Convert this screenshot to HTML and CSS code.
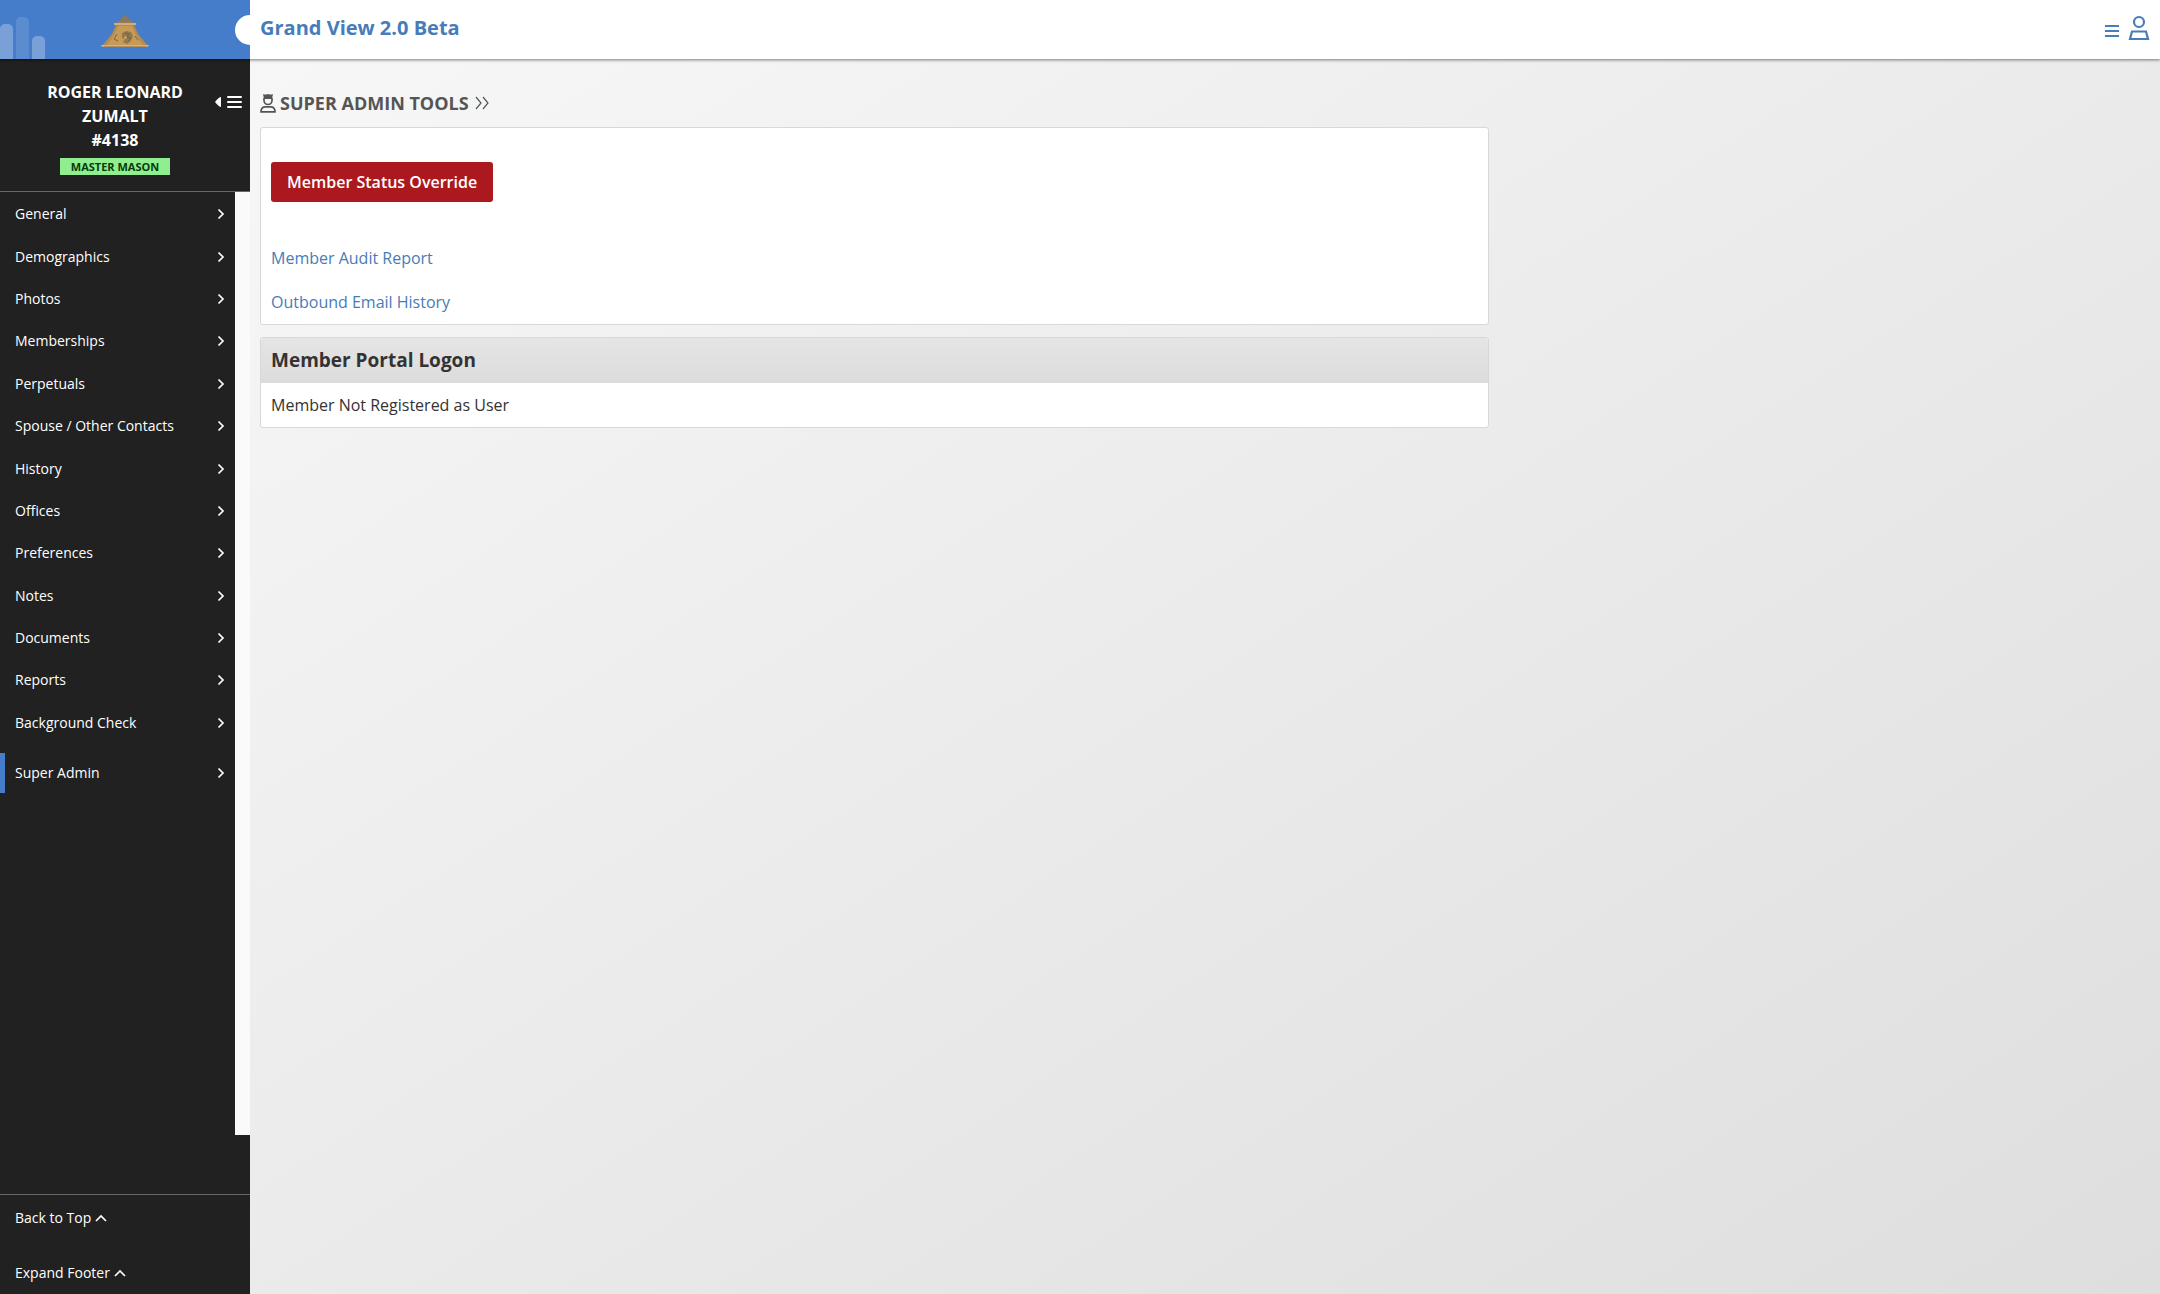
FILE: index.html
```html
<!DOCTYPE html>
<html lang="en">
<head>
<meta charset="utf-8">
<meta name="viewport" content="width=device-width, initial-scale=1">
<title>Grand View 2.0 Beta</title>
<link rel="stylesheet" href="styles.css">
</head>
<body>
<svg class="sprite" aria-hidden="true">
  <symbol id="chevron" viewBox="0 0 8 12"><path d="M1.500 1.500 6 6l-4.500 4.500" fill="none" stroke="currentColor" stroke-width="1.700"/></symbol>
  <symbol id="caret-up" viewBox="0 0 12 8"><path d="M1 7l5-5 5 5" fill="none" stroke="currentColor" stroke-width="1.700"/></symbol>
</svg>
<header class="topbar">
  <div class="brand">
    <span class="bars"><i class="bar"></i><i class="bar bar-tall"></i><i class="bar bar-short"></i></span>
    <svg class="logo" viewBox="0 0 50 36" role="img" aria-label="Logo">
      <path d="M25 0l1 3 3 2 2 4H19l2-4 3-2z" fill="#8b7660"/>
      <path d="M18 8h14l2 2H16z" fill="#987a4c"/>
      <path d="M14 10h22v2H14z" fill="#c9ae88"/>
      <path d="M16 12h18l4 9 10 12H2l10-12z" fill="#b98a48"/>
      <path d="M18 13h14l4 9 7 10H7l7-10z" fill="#c79a55"/>
      <path d="M22 20l4-2 5 1 2 4-2 5-4 3-4-2 2-3-3-1z" fill="#94774a"/>
      <path d="M25 20l4 1-2 3 4 1-3 3m-11-7-3 5 4 2m17-5 3 4" fill="none" stroke="#6f6650" stroke-width="1"/>
      <path d="M24 24l2-1 1 2-2 1z" fill="#d3aa68"/>
      <path d="M1 32h48v1l-3 1H4l-3-1z" fill="#d0b284"/>
      <path d="M4 34h42" stroke="#8e7144" stroke-width="1"/>
    </svg>
    <span class="knob"></span>
  </div>
  <div class="topbar-main">
    <a class="title" href="#">Grand View 2.0 Beta</a>
    <div class="actions">
      <button class="icon-button" aria-label="Menu"><svg width="16" height="14" viewBox="0 0 16 14"><path d="M1 2h14M1 7h14M1 12h14" stroke="currentColor" stroke-width="2"/></svg></button>
      <button class="icon-button" aria-label="Account"><svg width="22" height="26" viewBox="0 0 22 26"><circle cx="11" cy="7" r="5" fill="none" stroke="currentColor" stroke-width="2.200"/><path d="M4 16.500h14l2 7.500H2z" fill="none" stroke="currentColor" stroke-width="2.200"/></svg></button>
    </div>
  </div>
</header>
<div class="shell">
  <aside class="sidebar">
    <div class="profile">
      <div class="member">
        <div>ROGER LEONARD ZUMALT</div>
        <div>#4138</div>
        <span class="badge">MASTER MASON</span>
      </div>
      <button class="collapse" aria-label="Collapse menu"><svg width="28" height="14" viewBox="0 0 28 14"><path d="M7 2v10Q5 12 1 7 5 2 7 2z" fill="currentColor"/><path d="M14 2h13M14 7h13M14 12h13" stroke="currentColor" stroke-width="2" stroke-linecap="round"/></svg></button>
    </div>
    <nav class="nav">
      <ul class="nav-list">
        <li><a href="#">General<svg><use href="#chevron"/></svg></a></li>
        <li><a href="#">Demographics<svg><use href="#chevron"/></svg></a></li>
        <li><a href="#">Photos<svg><use href="#chevron"/></svg></a></li>
        <li><a href="#">Memberships<svg><use href="#chevron"/></svg></a></li>
        <li><a href="#">Perpetuals<svg><use href="#chevron"/></svg></a></li>
        <li><a href="#">Spouse / Other Contacts<svg><use href="#chevron"/></svg></a></li>
        <li><a href="#">History<svg><use href="#chevron"/></svg></a></li>
        <li><a href="#">Offices<svg><use href="#chevron"/></svg></a></li>
        <li><a href="#">Preferences<svg><use href="#chevron"/></svg></a></li>
        <li><a href="#">Notes<svg><use href="#chevron"/></svg></a></li>
        <li><a href="#">Documents<svg><use href="#chevron"/></svg></a></li>
        <li><a href="#">Reports<svg><use href="#chevron"/></svg></a></li>
        <li><a href="#">Background Check<svg><use href="#chevron"/></svg></a></li>
      </ul>
      <a class="nav-active" href="#" aria-current="page">Super Admin<svg><use href="#chevron"/></svg></a>
    </nav>
    <div class="side-footer">
      <a href="#">Back to Top <svg><use href="#caret-up"/></svg></a>
      <a href="#">Expand Footer <svg><use href="#caret-up"/></svg></a>
    </div>
  </aside>
  <main class="content">
    <h1 class="page-title">
      <svg width="16" height="19" viewBox="0 0 16 19" aria-hidden="true"><path d="M3 0q2 1 5 0 3 1 5 0l-1 5H4z" fill="currentColor"/><path d="M4 4v2.500a4 4 0 0 0 8 0V4M1 17.800c0-3.500 2-5 4.500-5h5c2.500 0 4.500 1.500 4.500 5z" fill="none" stroke="currentColor" stroke-width="1.700"/></svg>
      SUPER ADMIN TOOLS
      <svg class="title-arrows" width="14" height="14" viewBox="0 0 14 14" aria-hidden="true"><path d="M1 1l5 6-5 6M8 1l5 6-5 6" fill="none" stroke="currentColor" stroke-width="1.200"/></svg>
    </h1>
    <section class="panel tools">
      <button class="override">Member Status Override</button>
      <a href="#">Member Audit Report</a>
      <a href="#">Outbound Email History</a>
    </section>
    <section class="panel">
      <h2 class="panel-title">Member Portal Logon</h2>
      <p class="panel-text">Member Not Registered as User</p>
    </section>
  </main>
</div>
</body>
</html>
```
FILE: styles.css
```css
* { box-sizing: border-box; }
body {
  margin: 0;
  min-height: 100vh;
  display: flex;
  flex-direction: column;
  font: 16px/24px "Open Sans", "Noto Sans", sans-serif;
  color: #333;
  background: #eee;
}
a { color: #477cb9; text-decoration: none; }
button { font: inherit; border: 0; padding: 0; background: none; cursor: pointer; }
svg { display: block; flex: none; }
.sprite { position: absolute; width: 0; height: 0; }

.topbar { display: flex; height: 59px; position: relative; box-shadow: 0 1px 3px rgba(0, 0, 0, .5); }
.brand {
  position: relative;
  width: 250px;
  display: flex;
  justify-content: center;
  align-items: flex-start;
  padding-top: 13px;
  overflow: hidden;
  background: #467dca;
}
.logo { width: 50px; height: 36px; }
.bars { position: absolute; left: 0; bottom: 0; display: flex; align-items: flex-end; gap: 3px; }
.bar { width: 13px; height: 35px; border-radius: 5px 5px 0 0; background: rgba(255, 255, 255, .28); }
.bar-tall { height: 42px; background: rgba(255, 255, 255, .12); }
.bar-short { height: 23px; }
.knob { position: absolute; right: -15px; top: 15px; width: 30px; height: 30px; border-radius: 50%; background: #fff; }
.topbar-main { flex: 1; display: flex; justify-content: space-between; padding: 14px 10px 0; background: #fff; }
.title { font-size: 20px; line-height: 28px; font-weight: 700; }
.actions { display: flex; align-items: flex-start; gap: 8px; }
.icon-button { color: #477cb9; height: 28px; display: flex; align-items: center; }
.icon-button:first-child { height: 34px; }

.shell { flex: 1; display: flex; }
.sidebar { width: 250px; display: flex; flex-direction: column; background: #212121; }
.profile { display: flex; padding: 21px 8px 16px 30px; border-bottom: 1px solid #666; color: #fff; }
.member { width: 170px; text-align: center; font-weight: 700; }
.badge {
  display: block;
  width: 110px;
  margin: 6px auto 0;
  font-size: 11px;
  line-height: 17px;
  color: #063b06;
  background: #90ee90;
}
.collapse { margin: 15px 0 0 auto; color: #fff; height: 14px; }
.nav {
  flex: 1;
  padding: 1px 15px 0 0;
  background: linear-gradient(to left, #fafafa 15px, #212121 15px);
}
.nav-list { height: 551px; margin: 0; padding: 0; list-style: none; display: flex; flex-direction: column; }
.nav-list li { flex: 1; display: flex; }
.nav a {
  flex: 1;
  display: flex;
  align-items: center;
  justify-content: space-between;
  padding: 0 10px 0 15px;
  font-size: 14px;
  line-height: 20px;
  color: #fff;
}
.nav svg { width: 8px; height: 12px; }
.nav .nav-active { height: 40px; margin-top: 9px; padding-left: 10px; border-left: 5px solid #467dca; }
.side-footer { margin-top: 59px; padding: 13px 15px 11px; border-top: 1px solid #666; display: grid; gap: 35px; }
.side-footer a { display: flex; align-items: center; gap: 4px; font-size: 14px; line-height: 20px; color: #fff; }
.side-footer svg { width: 12px; height: 8px; }

.content { flex: 1; padding: 32px 10px; background: linear-gradient(to bottom right, #f7f7f7, #dedede); }
.page-title {
  display: flex;
  align-items: center;
  gap: 4px;
  margin: 0 0 12px;
  font-size: 18px;
  line-height: 24px;
  font-weight: 700;
  color: #555;
}
.title-arrows { margin-left: 2px; }
.panel { width: 65%; margin-bottom: 12px; border: 1px solid #d8d8d8; border-radius: 3px; background: #fff; overflow: hidden; }
.tools { display: flex; flex-direction: column; align-items: flex-start; gap: 20px; padding: 34px 10px 10px; }
.override {
  height: 40px;
  margin-bottom: 24px;
  padding: 0 16px;
  border-radius: 3px;
  font-weight: 600;
  color: #fff;
  background: #ab191f;
}
.panel-title { margin: 0; padding: 8px 10px; font-size: 19px; line-height: 29px; font-weight: 700; background: linear-gradient(#e5e5e5, #dcdcdc); }
.panel-text { margin: 0; padding: 10px; }
```
